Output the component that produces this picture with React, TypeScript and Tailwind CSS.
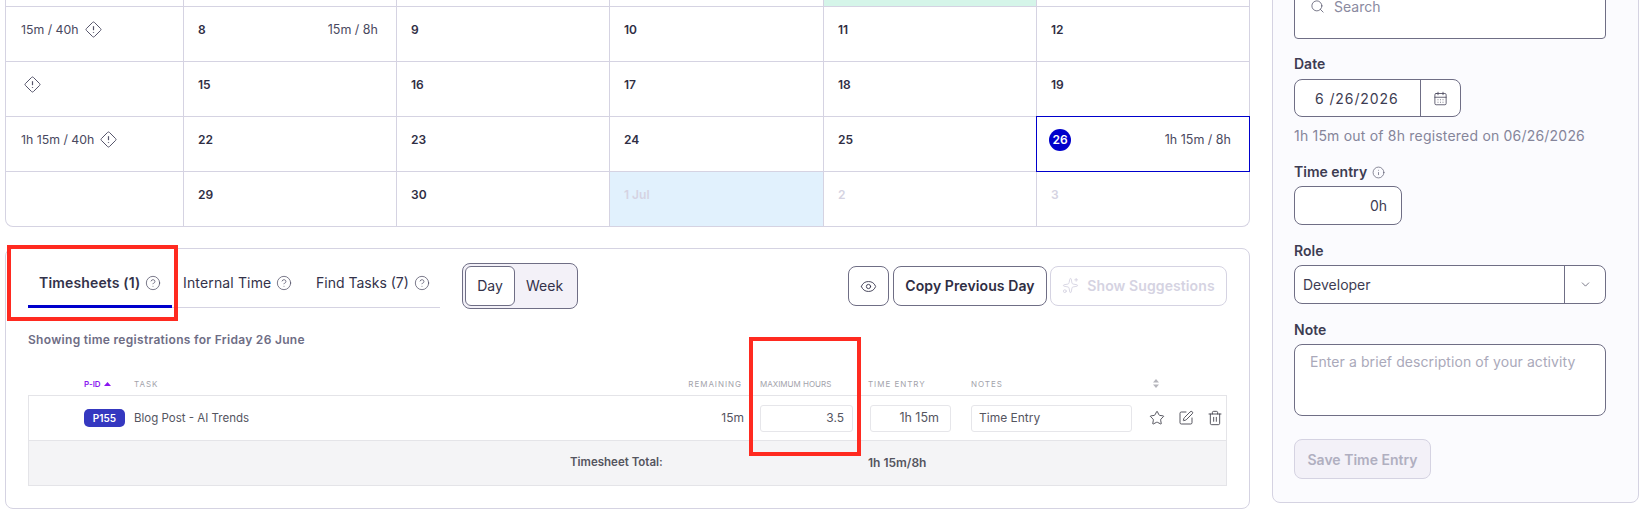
import React from "react";
import { CircleHelp, Info, Search, CalendarDays, ChevronDown, Eye, Sparkles, Star, SquarePen, Trash2 } from "lucide-react";

function Diamond() {
  return (
    <svg width="17" height="17" viewBox="0 0 17 17" fill="none" stroke="#55546a" strokeWidth="1" className="shrink-0">
      <path d="M7.6 1.4a1.3 1.3 0 0 1 1.8 0l6.2 6.2a1.3 1.3 0 0 1 0 1.8l-6.2 6.2a1.3 1.3 0 0 1-1.8 0L1.4 9.4a1.3 1.3 0 0 1 0-1.8z" />
      <path d="M8.5 5.2v4" strokeWidth="1.2" />
      <path d="M8.5 11v.8" strokeWidth="1.2" />
    </svg>
  );
}

function Day({ n, hours, tint }: { n: string; hours?: string; tint?: string }) {
  return (
    <div className={`flex items-start justify-between border-r border-b border-[#d5d3e2] pt-[15px] pl-[14px] pr-[18px] ${tint ?? ""}`}>
      <span className="text-[12px] leading-[16px] font-semibold text-[#2f2e44]">{n}</span>
      {hours && <span className="text-[12.5px] leading-[16px] text-[#4a4960]">{hours}</span>}
    </div>
  );
}

function Week({ text }: { text?: string }) {
  return (
    <div className="flex items-start gap-[6px] border-r border-b border-[#d5d3e2] pt-[14px] pl-[15px] text-[12.3px] leading-[18px] text-[#4a4960]">
      {text ? <span>{text}</span> : <span className="-mr-[3px]" />}
      <Diamond />
    </div>
  );
}

function Calendar() {
  const grid = "grid h-[55px] grid-cols-[178px_213px_213px_214px_213px_212px]";
  const endCell = "border-b border-[#d5d3e2] pt-[15px] pl-[14px] text-[12px] leading-[16px] font-semibold text-[#2f2e44]";
  const lastCell = "pt-[15px] pl-[14px] text-[12px] leading-[16px] font-semibold";
  return (
    <div className="w-[1245px] rounded-b-lg border-x border-b border-[#d5d3e2]">
      <div className={grid}>
        <div className="border-r border-b border-[#d5d3e2]" />
        <Day n="" />
        <Day n="" />
        <Day n="" />
        <Day n="" tint="bg-[#d5f5e9]" />
        <div className="border-b border-[#d5d3e2]" />
      </div>
      <div className={grid}>
        <Week text="15m / 40h" />
        <Day n="8" hours="15m / 8h" />
        <Day n="9" />
        <Day n="10" />
        <Day n="11" />
        <div className={endCell}>12</div>
      </div>
      <div className={grid}>
        <Week />
        <Day n="15" />
        <Day n="16" />
        <Day n="17" />
        <Day n="18" />
        <div className={endCell}>19</div>
      </div>
      <div className={grid}>
        <Week text="1h 15m / 40h" />
        <Day n="22" />
        <Day n="23" />
        <Day n="24" />
        <Day n="25" />
        <div className="-mt-px -mr-px -ml-px flex items-start justify-between border border-[#0000cc] pt-[12px] pr-[18px] pl-[12px]">
          <span className="flex h-[22px] w-[22px] items-center justify-center rounded-full bg-[#0000cc] text-[12px] font-semibold text-white">26</span>
          <span className="pt-[3px] text-[12.5px] leading-[16px] text-[#4a4960]">1h 15m / 8h</span>
        </div>
      </div>
      <div className="grid h-[54px] grid-cols-[178px_213px_213px_214px_213px_212px]">
        <div className="border-r border-[#d5d3e2]" />
        <div className={`${lastCell} border-r border-[#d5d3e2] text-[#2f2e44]`}>29</div>
        <div className={`${lastCell} border-r border-[#d5d3e2] text-[#2f2e44]`}>30</div>
        <div className={`${lastCell} border-r border-[#d5d3e2] bg-[#e1f1fd] text-[#d5d3e2]`}>1 Jul</div>
        <div className={`${lastCell} border-r border-[#d5d3e2] text-[#d5d3e2]`}>2</div>
        <div className={`${lastCell} text-[#d5d3e2]`}>3</div>
      </div>
    </div>
  );
}

function Tabs() {
  const help = <CircleHelp size={16} strokeWidth={1.1} className="mt-[1px] text-[#4a4960]" />;
  return (
    <div className="flex h-[59px] w-[412px] border-b border-[#d5d3e2]">
      <div className="flex h-[59px] w-[144px] items-start gap-[5px] border-b-[3px] border-[#0000cc] pt-[25px] pl-[11px] text-[14px] leading-[18px] font-semibold tracking-[0.15px] text-[#33324a]">
        Timesheets (1) {help}
      </div>
      <div className="flex w-[133px] items-start gap-[5px] pt-[25px] pl-[11px] text-[14px] leading-[18px] tracking-[0.15px] text-[#33324a]">
        Internal Time {help}
      </div>
      <div className="flex flex-1 items-start gap-[5px] pt-[25px] pl-[11px] text-[14px] leading-[18px] text-[#33324a]">
        Find Tasks (7) {help}
      </div>
    </div>
  );
}

const rowGrid = "grid grid-cols-[55px_50px_511px_100px_123px_103px_179px_76px]";

function Table() {
  const head = "text-[8px] uppercase tracking-[0.12em] text-[#a3a3ab]";
  return (
    <div className="mt-[24px] ml-[22px] w-[1199px]">
      <div className={`${rowGrid} h-[24px] items-center border-b border-[#e4e4e8] px-px`}>
        <div />
        <div className="flex items-center gap-[3px] text-[8px] font-semibold text-[#8b16f0]">
          P-ID
          <svg width="7" height="4" viewBox="0 0 7 4"><path d="M3.5 0L7 4H0z" fill="#8b16f0" /></svg>
        </div>
        <div className={head}>Task</div>
        <div className={`${head} pr-[3px] text-right`}>Remaining</div>
        <div className="pl-[15px] text-[8px] text-[#a3a3ab] uppercase">Maximum Hours</div>
        <div className={head}>Time Entry</div>
        <div className={head}>Notes</div>
        <div className="pl-[3px]">
          <svg width="6" height="9" viewBox="0 0 6 9" fill="#b5b5bc"><path d="M3 0l3 3.5H0zM3 9L0 5.5h6z" /></svg>
        </div>
      </div>
      <div className={`${rowGrid} h-[45px] items-center border-x border-b border-[#e4e4e8] text-[12px] text-[#55555f]`}>
        <div />
        <div className="flex h-[18px] w-[41px] items-center justify-center rounded-[5px] bg-[#3538c0] text-[10px] font-semibold text-white">P155</div>
        <div className="pt-[2px] text-[11.5px]">Blog Post - AI Trends</div>
        <div className="pr-[1px] text-right">15m</div>
        <div className="pl-[15px]">
          <div className="flex h-[27px] w-[93px] items-center justify-end rounded-[3px] border border-[#e6e6ea] pr-[8px]">3.5</div>
        </div>
        <div className="pl-[2px]">
          <div className="flex h-[27px] w-[81px] items-center justify-end rounded-[3px] border border-[#e6e6ea] pr-[11px] text-[12.5px]">1h 15m</div>
        </div>
        <div>
          <div className="flex h-[27px] w-[161px] items-center rounded-[3px] border border-[#e6e6ea] pl-[7px]">Time Entry</div>
        </div>
        <div className="-ml-[1px] flex items-center gap-[13px] text-[#3d3d48]">
          <Star size={16} strokeWidth={1.3} />
          <SquarePen size={16} strokeWidth={1.3} />
          <Trash2 size={16} strokeWidth={1.3} />
        </div>
      </div>
      <div className="flex h-[45px] items-center border-x border-b border-[#e4e4e8] bg-[#f4f4f6] text-[11.5px] font-semibold text-[#55555f]">
        <div className="w-[839px] pl-[541px]">Timesheet Total:</div>
        <div className="text-[12px]">1h 15m/8h</div>
      </div>
    </div>
  );
}

function TimeCard() {
  return (
    <div className="mt-[21px] h-[261px] w-[1245px] rounded-lg border border-[#d5d3e2]">
      <div className="flex items-start pr-[22px] pl-[22px]">
        <Tabs />
        <div className="mt-[14px] ml-[22px] flex h-[46px] w-[116px] items-center rounded-lg border border-[#6f6e85] bg-[#f3f1f8] p-[2px] text-[14px] text-[#33324a]">
          <div className="flex h-[40px] w-[50px] items-center justify-center rounded-md border border-[#6f6e85] bg-white pb-[1px]">Day</div>
          <div className="pb-[1px] pl-[11px]">Week</div>
        </div>
        <div className="mt-[17px] ml-auto flex gap-[3px] text-[14px] font-semibold tracking-[0.1px]">
          <div className="mr-[1px] flex h-[40px] w-[41px] items-center justify-center rounded-lg border border-[#6f6e85] text-[#33324a]">
            <Eye size={17} strokeWidth={1.25} />
          </div>
          <div className="flex h-[40px] w-[154px] items-center justify-center rounded-lg border border-[#6f6e85] pb-[1px] text-[#2f2e44]">Copy Previous Day</div>
          <div className="flex h-[40px] w-[177px] items-center justify-center gap-[8px] rounded-lg border border-[#d5d3e2] pb-[1px] text-[#d5d3e2]">
            <Sparkles size={17} strokeWidth={1.25} />
            Show Suggestions
          </div>
        </div>
      </div>
      <div className="mt-[23px] pl-[22px] text-[12px] leading-[16px] font-semibold tracking-[0.3px] text-[#6e6d85]">Showing time registrations for Friday 26 June</div>
      <Table />
    </div>
  );
}

function Label({ children }: { children: React.ReactNode }) {
  return <div className="text-[14px] leading-[18px] font-semibold text-[#3d3c52]">{children}</div>;
}

function Panel() {
  const box = "rounded-lg border border-[#6f6e85] bg-white text-[14px] text-[#3d3c52]";
  return (
    <div className="ml-[22px] h-[551px] w-[367px] rounded-lg border border-[#d5d3e2] bg-[#fbfbfe] pt-[30px] pr-[32px] pl-[21px]">
      <div className="flex h-[56px] items-start gap-[9px] rounded-[4px] border border-[#6f6e85] bg-white pt-[17px] pl-[15px] text-[14px] leading-[12px] text-[#8a8a9f]">
        <Search size={15} strokeWidth={1.25} className="-mt-[2px] text-[#55546a]" />
        Search
      </div>
      <div className="mt-[16px]"><Label>Date</Label></div>
      <div className={`${box} mt-[6px] flex h-[38px] w-[167px] items-center`}>
        <div className="w-[125px] pl-[20px] tracking-[0.9px]">6&nbsp;/26/2026</div>
        <div className="flex h-full flex-1 items-center justify-center border-l border-[#6f6e85]">
          <CalendarDays size={15} strokeWidth={1.25} />
        </div>
      </div>
      <div className="mt-[10px] text-[14px] leading-[18px] tracking-[0.2px] text-[#85859a]">1h 15m out of 8h registered on 06/26/2026</div>
      <div className="mt-[18px] flex items-center gap-[5px]">
        <Label>Time entry</Label>
        <Info size={13} strokeWidth={1.25} className="text-[#55546a]" />
      </div>
      <div className={`${box} mt-[5px] flex h-[39px] w-[108px] items-center justify-end pr-[14px]`}>0h</div>
      <div className="mt-[17px]"><Label>Role</Label></div>
      <div className={`${box} mt-[5px] flex h-[39px] items-center`}>
        <div className="flex-1 pl-[8px]">Developer</div>
        <div className="flex h-full w-[41px] items-center justify-center border-l border-[#6f6e85]">
          <ChevronDown size={13} strokeWidth={1.25} />
        </div>
      </div>
      <div className="mt-[17px]"><Label>Note</Label></div>
      <div className="mt-[5px] h-[72px] rounded-lg border border-[#6f6e85] bg-white pt-[8px] pl-[15px] text-[14px] leading-[18px] tracking-[0.08px] text-[#aaa9ba]">Enter a brief description of your activity</div>
      <div className="mt-[23px] flex h-[40px] w-[137px] items-center justify-center rounded-lg border border-[#d5d3e2] bg-[#f3f1f8] text-[14px] font-semibold text-[#b0afc0]">Save Time Entry</div>
    </div>
  );
}

export default function App() {
  return (
    <div className="relative h-[522px] w-[1649px] overflow-hidden bg-white [font-family:Inter,sans-serif]">
      <div className="-mt-[48px] flex items-start pl-[5px]">
        <div>
          <Calendar />
          <TimeCard />
        </div>
        <Panel />
      </div>
      <div className="absolute top-[245px] left-[7px] h-[76px] w-[171px] border-4 border-[#ff2a20]" />
      <div className="absolute top-[337px] left-[749px] h-[119px] w-[112px] border-4 border-[#ff2a20]" />
    </div>
  );
}
